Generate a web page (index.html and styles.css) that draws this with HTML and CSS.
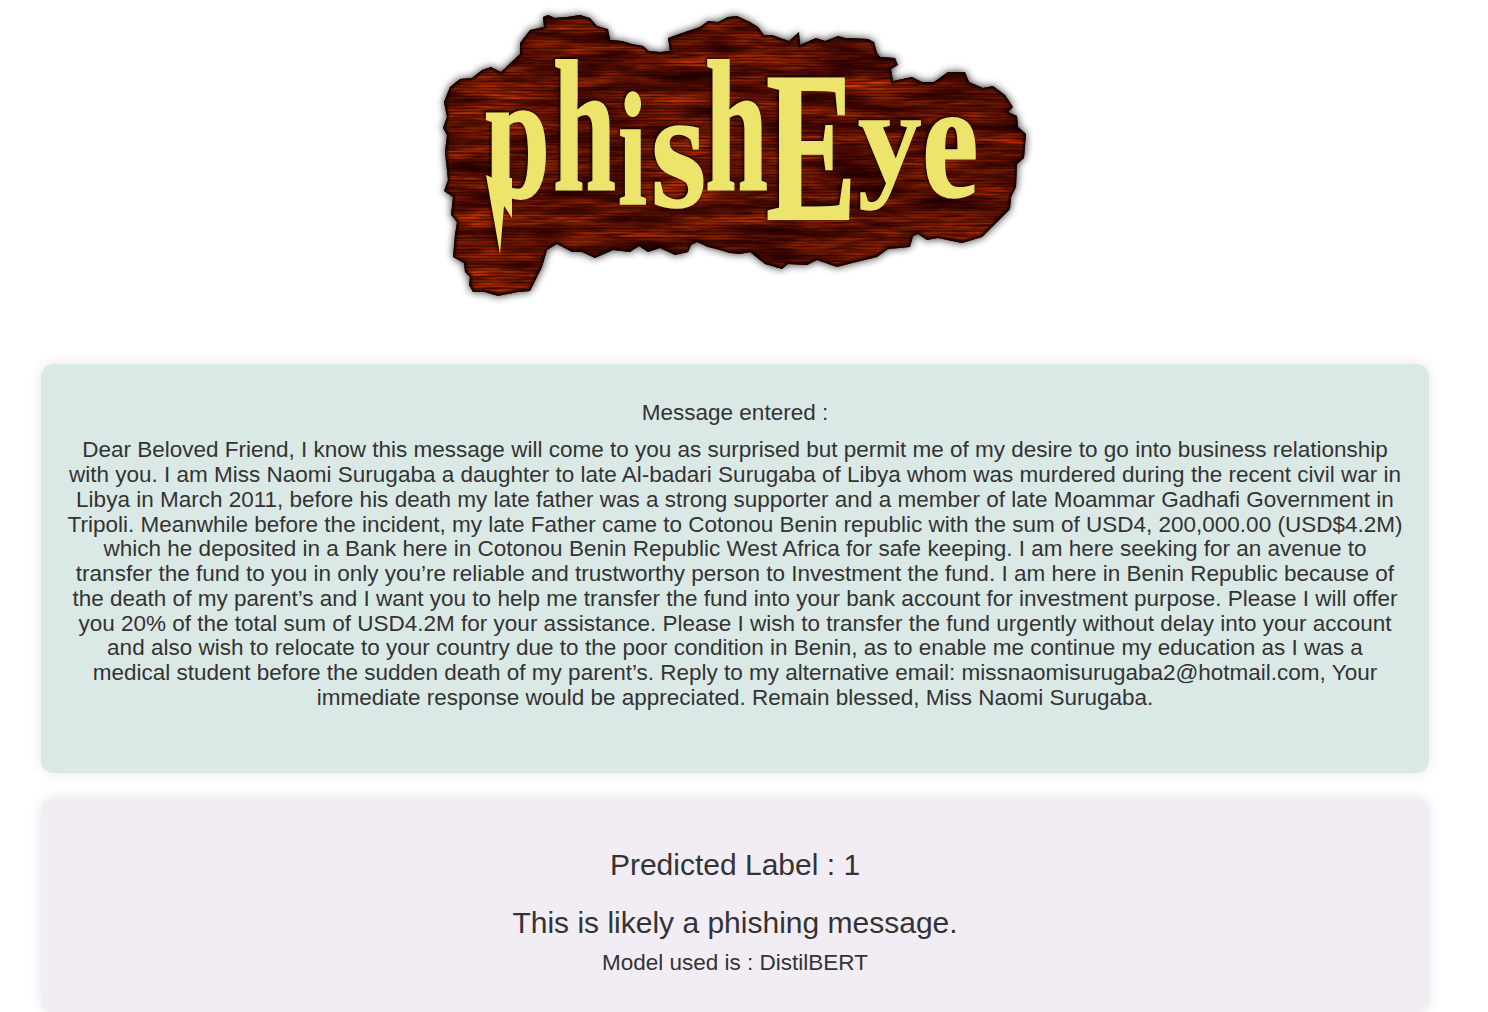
FILE: index.html
```html
<!DOCTYPE html>
<html lang="en">
<head>
<meta charset="utf-8">
<title>phishEye</title>
<link rel="stylesheet" href="styles.css">
</head>
<body>
<main class="page">
  <header class="banner">
    <svg class="logo" viewBox="420 0 630 320" role="img" aria-label="phishEye">
      <defs>
        <clipPath id="plank"><use href="#plank-shape"/></clipPath>
        <clipPath id="above-bolt"><path d="M470 90H560V203H512V180H470Z"/></clipPath>
        <filter id="wood" x="0" y="0" width="100%" height="100%" color-interpolation-filters="sRGB">
          <feTurbulence type="fractalNoise" baseFrequency="0.011 0.075" numOctaves="5" seed="8" result="n"/>
          <feColorMatrix in="n" type="matrix" values="1.05 0 0 0 -0.07  0.36 0 0 0 -0.08  0 0 0 0 0  0 0 0 0 1"/>
        </filter>
        <filter id="grain" x="0" y="0" width="100%" height="100%" color-interpolation-filters="sRGB">
          <feTurbulence type="fractalNoise" baseFrequency="0.03 0.4" numOctaves="2" seed="3"/>
          <feColorMatrix type="matrix" values="0 0 0 0 0.16  0 0 0 0 0  0 0 0 0 0  1.5 0 0 0 -0.45"/>
        </filter>
        <filter id="shade" x="-10%" y="-10%" width="120%" height="120%"><feGaussianBlur stdDeviation="4.5"/></filter>
        <filter id="rim" x="-10%" y="-10%" width="120%" height="120%"><feGaussianBlur stdDeviation="1.2"/></filter>
        <filter id="emboss" x="-10%" y="-10%" width="120%" height="120%" color-interpolation-filters="sRGB">
          <feDropShadow dx="-1.5" dy="-1.5" stdDeviation="1.6" flood-color="#100" flood-opacity=".95"/>
        </filter>
        <pattern id="lines" width="8" height="3" patternUnits="userSpaceOnUse"><rect width="8" height="1" fill="#200" opacity=".35"/></pattern>
        <path id="plank-shape" d="M543 17L548 15 555 18 567 17 580 15 590 18 597 26 608 29 610 40 622 41 632 44 643 46 649 51 660 52 670 51 668 38 685 32 700 27 708 21 718 22 728 17 737 16 750 22 758 27 764 35 772 35 789 41 799 32 800 45 816 38 825 41 838 36 845 38 868 39 874 42 877 53 880 57 895 58 898 65 891 69 893 81 912 77 922 82 934 82 948 72 965 72 969 82 983 88 993 86 1005 95 1013 107 1008 112 1017 116 1018 127 1026 134 1024 158 1017 164 1016 187 1011 197 1010 209 997 222 982 237 962 243 938 238 927 240 918 234 913 236 910 247 888 249 877 257 852 263 837 267 817 260 807 265 788 264 782 269 765 264 750 252 740 254 730 253 720 250 708 247 697 242 691 245 688 252 675 255 660 248 648 252 639 246 630 252 613 250 595 258 582 252 572 252 557 244 547 250 542 267 530 291 518 292 498 296 485 292 473 292 469 285 470 277 465 272 464 263 453 257 455 235 457 222 451 215 453 197 444 191 448 180 445 152 447 135 443 128 447 117 444 102 450 87 460 79 472 78 482 70 491 67 501 72 520 54 520 43 530 30 544 27Z"/>
      </defs>
      <use href="#plank-shape" fill="#000" opacity=".85" filter="url(#shade)"/>
      <g clip-path="url(#plank)">
        <rect x="440" y="10" width="590" height="290" filter="url(#wood)"/>
        <rect x="440" y="10" width="590" height="290" filter="url(#grain)"/>
        <rect x="440" y="10" width="590" height="290" fill="url(#lines)"/>
        <use href="#plank-shape" fill="none" stroke="#0c0000" stroke-width="4" filter="url(#rim)"/>
      </g>
      <g class="lettering" filter="url(#emboss)">
        <g clip-path="url(#above-bolt)"><text transform="translate(485 197) scale(1.17 1.82)">p</text></g>
        <text transform="translate(553 190) scale(1.13 1.86)">h</text>
        <text transform="translate(618 204) scale(1.04 1.62)">i</text>
        <text transform="translate(651 206) scale(1.42 1.7)">s</text>
        <text transform="translate(705 190) scale(1.13 1.86)">h</text>
        <text transform="translate(766 219) scale(1.36 2.13)">E</text>
        <text transform="translate(858 182) scale(1.27 1.31)">y</text>
        <text transform="translate(922 196) scale(1.27 1.68)">e</text>
        <path class="bolt" d="M493 178L486 175 500 254 504 206 512 218 512 178Z"/>
      </g>
    </svg>
  </header>
  <section class="card message">
    <p class="text">Message entered :</p>
    <p class="text">Dear Beloved Friend, I know this message will come to you as surprised but permit me of my desire to go into business relationship<br>with you. I am Miss Naomi Surugaba a daughter to late Al-badari Surugaba of Libya whom was murdered during the recent civil war in<br>Libya in March 2011, before his death my late father was a strong supporter and a member of late Moammar Gadhafi Government in<br>Tripoli. Meanwhile before the incident, my late Father came to Cotonou Benin republic with the sum of USD4, 200,000.00 (USD$4.2M)<br>which he deposited in a Bank here in Cotonou Benin Republic West Africa for safe keeping. I am here seeking for an avenue to<br>transfer the fund to you in only you’re reliable and trustworthy person to Investment the fund. I am here in Benin Republic because of<br>the death of my parent’s and I want you to help me transfer the fund into your bank account for investment purpose. Please I will offer<br>you 20% of the total sum of USD4.2M for your assistance. Please I wish to transfer the fund urgently without delay into your account<br>and also wish to relocate to your country due to the poor condition in Benin, as to enable me continue my education as I was a<br>medical student before the sudden death of my parent’s. Reply to my alternative email: missnaomisurugaba2@hotmail.com, Your<br>immediate response would be appreciated. Remain blessed, Miss Naomi Surugaba.</p>
  </section>
  <section class="card result">
    <h1 class="label">Predicted Label : 1</h1>
    <h1 class="verdict">This is likely a phishing message.</h1>
    <p class="text">Model used is : DistilBERT</p>
  </section>
</main>
</body>
</html>
```
FILE: styles.css
```css
* { box-sizing: border-box; }
html { overflow: hidden; }
body {
  margin: 0;
  height: 1012px;
  overflow: hidden;
  background: #fff;
  color: #333;
  font-family: Arial, "Liberation Sans", sans-serif;
}
.page { width: 1470px; padding: 0 41px; }
.banner { height: 364px; display: flex; justify-content: center; align-items: flex-start; }
.logo { display: block; width: 630px; height: 320px; }
.lettering { fill: #ede46c; stroke: #ede46c; stroke-width: 1; }
.lettering text { font: bold 100px "Liberation Serif", serif; }
.bolt { stroke: none; }
.card {
  border-radius: 12.5px;
  box-shadow: 0 0 12.5px rgba(0, 0, 0, .1);
  text-align: center;
}
.message { height: 408.75px; padding-top: 37.2px; background: #dbe9e6; }
.result { height: 215px; margin-top: 25px; padding-top: 50px; background: #f2edf5; }
.text { margin: 0 0 12.5px; font-size: 22.5px; line-height: 24.75px; white-space: nowrap; }
h1 { margin: 0; font-size: 30px; font-weight: 400; line-height: 33px; }
.label { margin-bottom: 25px; }
.verdict { margin-bottom: 12.5px; }
```
